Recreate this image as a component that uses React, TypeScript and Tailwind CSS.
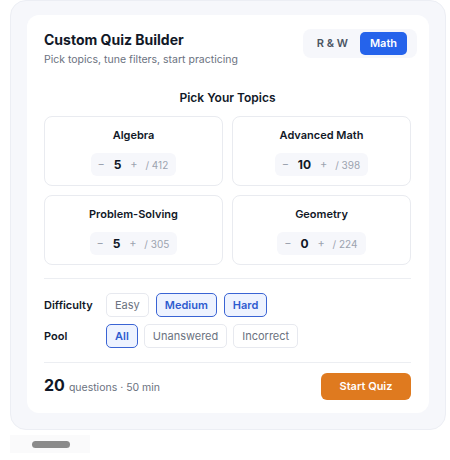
import React from "react";

const topics = [
  { name: "Algebra", count: 5, total: 412 },
  { name: "Advanced Math", count: 10, total: 398 },
  { name: "Problem-Solving", count: 5, total: 305 },
  { name: "Geometry", count: 0, total: 224 },
];

function Chip({ label, active }: { label: string; active?: boolean }) {
  return (
    <button
      className={
        active
          ? "h-[24px] px-[8px] rounded-[5px] border border-[#3a64d4] bg-[#eef3ff] text-[#2f5ccf] text-[11px] font-semibold leading-none"
          : "h-[24px] px-[8px] rounded-[5px] border border-[#e7e9ef] bg-white text-[#6b7280] text-[11px] leading-none"
      }
    >
      {label}
    </button>
  );
}

export default function App() {
  return (
    <div
      className="w-[450px] h-[460px] bg-white overflow-hidden"
      style={{ fontFamily: "Inter, 'Noto Sans', sans-serif" }}
    >
      <div className="ml-[10px] w-[436px] rounded-[16px] border border-[#eceef4] bg-[#f6f7fb] pt-[14px] pl-[16px] pr-[16px] pb-[16px]">
        <div className="w-[402px] h-[398px] rounded-[12px] bg-white pl-[17px] pr-[18px] pt-[15px]">
          <div className="flex justify-between items-start">
            <div>
              <div className="text-[14px] leading-[20px] font-bold text-[#111827]">Custom Quiz Builder</div>
              <div className="text-[10.5px] leading-[16px] text-[#6b7280] mt-[2px]">Pick topics, tune filters, start practicing</div>
            </div>
            <div className="flex items-center gap-[2px] bg-[#f6f7fb] rounded-[8px] pl-[4px] pr-[10px] py-[3px] mr-[-6px] -mt-[1px]">
              <button className="h-[23px] px-[10px] text-[11px] font-semibold text-[#4b5563] leading-none">R &amp; W</button>
              <button className="h-[23px] w-[47px] rounded-[5px] bg-[#2563eb] text-[11px] font-semibold text-white leading-none">Math</button>
            </div>
          </div>

          <div className="mt-[21px] text-center text-[12px] leading-[18px] font-semibold text-[#111827]">Pick Your Topics</div>

          <div className="mt-[9px] grid grid-cols-2 gap-[9px]">
            {topics.map((t) => (
              <div key={t.name} className="h-[70px] rounded-[8px] border border-[#e9ebf0] flex flex-col items-center pt-[10px]">
                <div className="text-[11px] leading-[16px] font-semibold text-[#111827]">{t.name}</div>
                <div className="mt-[10px] h-[23px] rounded-[6px] bg-[#f6f7fb] flex items-center pl-[6px] pr-[8px] gap-[3px]">
                  <span className="w-[9px] text-center text-[11px] text-[#9ca3af] leading-none">−</span>
                  <span className="px-[5px] text-[12px] font-bold text-[#111827] leading-none">{t.count}</span>
                  <span className="w-[9px] text-center text-[11px] text-[#9ca3af] leading-none">+</span>
                  <span className="ml-[4px] text-[10px] text-[#9ca3af] leading-none">/ {t.total}</span>
                </div>
              </div>
            ))}
          </div>

          <div className="mt-[13px] border-t border-[#eceef2]" />

          <div className="pt-[14px] flex flex-col gap-[7px]">
            <div className="flex items-center">
              <div className="w-[62px] text-[11px] font-semibold text-[#111827]">Difficulty</div>
              <div className="flex gap-[7px]">
                <Chip label="Easy" />
                <Chip label="Medium" active />
                <Chip label="Hard" active />
              </div>
            </div>
            <div className="flex items-center">
              <div className="w-[62px] text-[11px] font-semibold text-[#111827]">Pool</div>
              <div className="flex gap-[6px]">
                <Chip label="All" active />
                <Chip label="Unanswered" />
                <Chip label="Incorrect" />
              </div>
            </div>
          </div>

          <div className="mt-[14px] border-t border-[#eceef2]" />

          <div className="pt-[10px] flex items-center justify-between">
            <div className="flex items-baseline gap-[4px]">
              <span className="text-[16px] font-bold text-[#111827] leading-none">20</span>
              <span className="text-[10.5px] text-[#6b7280]">questions · 50 min</span>
            </div>
            <button className="h-[27px] w-[90px] rounded-[6px] bg-[#df7a1f] text-white text-[11px] font-semibold">Start Quiz</button>
          </div>
        </div>
      </div>
      <div className="ml-[10px] mt-[5px] w-[80px] h-[18px] bg-[#fafafb] flex items-center pl-[22px]">
        <div className="w-[38px] h-[7px] rounded-full bg-[#8b8b8b]" />
      </div>
    </div>
  );
}
